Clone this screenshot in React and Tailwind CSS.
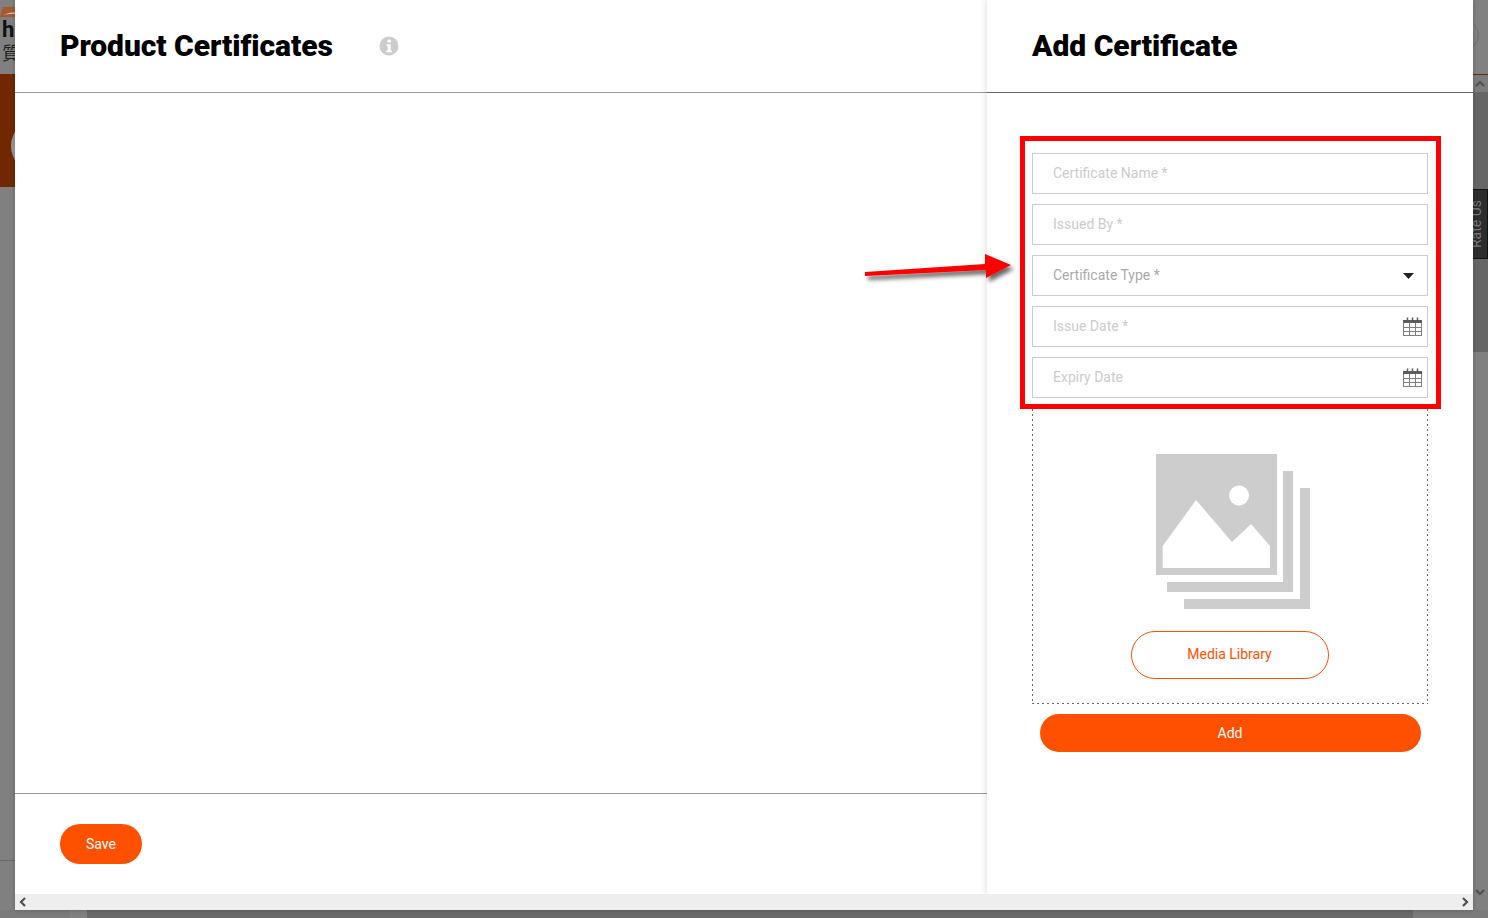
import React from "react";

const Calendar = () => (
  <svg width="19" height="19" viewBox="0 0 19 19" className="shrink-0">
    <rect x="0.5" y="3.5" width="18" height="15" fill="#fff" stroke="#808080" />
    <rect x="0" y="3" width="19" height="3" fill="#5c5c5c" />
    <path d="M6.500 6v13M12.500 6v13M0 10.500h19M0 14.500h19" stroke="#808080" />
    <path d="M4.500 0.500v3M9.500 0.500v3M14.500 0.500v3" stroke="#5c5c5c" strokeWidth="1.500" />
  </svg>
);

const Field = ({ label, dark, children }) => (
  <div className="flex h-[41px] items-center justify-between border border-[#ccc] pl-5 pr-[5px]">
    <span className={"-mt-[2px] text-sm " + (dark ? "text-[#aaa]" : "text-[#ccc]")}>{label}</span>
    {children}
  </div>
);

const Chevron = ({ d, className }) => (
  <svg width="10" height="10" viewBox="0 0 10 10" className={className}>
    <path d={d} fill="none" stroke="#505050" strokeWidth="2.200" />
  </svg>
);

export default function App() {
  return (
    <div className="relative flex h-[918px] w-[1488px] flex-col overflow-hidden bg-[#808080] font-['Roboto',sans-serif]">
      <div className="flex h-[910px] shrink-0">
        {/* Page behind the overlay, left side */}
        <div className="flex h-full w-[15px] shrink-0 flex-col overflow-hidden">
          <div className="h-[74px] overflow-hidden pt-[7px]">
            <svg width="15" height="10" viewBox="0 0 15 10" className="block">
              <path d="M3 0h12v10H0z" fill="#a5592c" />
              <path d="M2 8.500C6 6.500 10 5 15 5.500V7C10 6.500 6 7.500 2 8.500z" fill="#cfcfcf" />
            </svg>
            <div className="mt-[3px] pl-[2px] text-[22px] font-bold leading-[20px] text-[#111]">h</div>
            <div className="mt-[2px] w-[15px] overflow-hidden whitespace-nowrap pl-[2px] font-['Noto_Sans_CJK_TC',sans-serif] text-[18px] leading-[20px] text-[#222]">
              質
            </div>
          </div>
          <div className="h-[113px] overflow-hidden bg-[#712800] pt-[45px]">
            <div className="ml-[11px] h-[54px] w-[54px] rounded-full bg-[#999999]" />
          </div>
          <div className="mt-[673px] h-px bg-[#6b6b6b]" />
        </div>

        {/* Modal */}
        <div className="z-10 flex h-[910px] w-[1458px] shrink-0 flex-col bg-white shadow-[0_0_4px_rgba(0,0,0,0.25)]">
          <div className="flex min-h-0 flex-1">
            {/* Left pane */}
            <div className="flex w-[972px] shrink-0 flex-col">
              <div className="flex h-[93px] shrink-0 items-center border-b border-[#999] pb-px pl-[45px]">
                <h1 className="text-[30px] font-black leading-[36px] tracking-[-0.05px] text-black">Product Certificates</h1>
                <svg width="20" height="20" viewBox="0 0 20 20" className="ml-[46px] mt-px">
                  <circle cx="10" cy="10" r="9.500" fill="#ccc" />
                  <rect x="8.500" y="3.500" width="3.400" height="3.200" rx="1" fill="#fff" />
                  <path d="M7.500 8.200h4.200v6.400h1.200v1.700H7.500v-1.700h1.200V10H7.500z" fill="#fff" />
                </svg>
              </div>
              <div className="flex-1" />
              <div className="h-[101px] shrink-0 border-t border-[#999] pl-[45px] pt-[30px]">
                <button className="h-10 w-[82px] rounded-full bg-[#ff5000] text-sm text-white">Save</button>
              </div>
            </div>

            {/* Right pane */}
            <div className="z-10 flex w-[486px] shrink-0 flex-col shadow-[-3px_0_5px_rgba(0,0,0,0.08)]">
              <div className="flex h-[93px] shrink-0 items-center border-b border-[#666] pb-px pl-[45px]">
                <h2 className="text-[30px] font-black leading-[36px] text-black">Add Certificate</h2>
              </div>
              <div className="ml-[45px] mt-[60px] flex w-[396px] flex-col gap-[10px]">
                <Field label="Certificate Name *" />
                <Field label="Issued By *" />
                <Field label="Certificate Type *" dark>
                  <svg width="11" height="6" viewBox="0 0 11 6" className="mr-[8px]">
                    <path d="M0 0h11L5.500 6z" fill="#222" />
                  </svg>
                </Field>
                <Field label="Issue Date *">
                  <Calendar />
                </Field>
                <Field label="Expiry Date">
                  <Calendar />
                </Field>
              </div>
              <div className="ml-[45px] mt-[11px] flex h-[295px] w-[396px] flex-col items-center pt-[45px] [background:repeating-linear-gradient(to_bottom,#666_0_2px,transparent_2px_5px)_left_top/1px_100%_no-repeat,repeating-linear-gradient(to_bottom,#666_0_2px,transparent_2px_5px)_right_top/1px_100%_no-repeat,repeating-linear-gradient(to_right,#666_0_2px,transparent_2px_5px)_left_bottom/100%_1px_no-repeat]">
                <svg width="155" height="156" viewBox="0 0 155 156" className="ml-[7px]">
                  <path d="M0 0h121v121H0z" fill="#cdcdcd" />
                  <path d="M6.700 114V92L40 46 76 88 95 70 114 92V114z" fill="#fff" />
                  <circle cx="83" cy="41.500" r="10" fill="#fff" />
                  <path d="M127 17h10v121H11v-10h116z" fill="#cdcdcd" />
                  <path d="M144 34h10v121H28v-10h116z" fill="#cdcdcd" />
                </svg>
                <button className="mt-[21px] h-12 w-[198px] rounded-full border border-[#ff5000] bg-white pb-[2px] pr-px text-sm text-[#ff5000]">
                  Media Library
                </button>
              </div>
              <button className="ml-[53px] mt-[10px] h-[38px] w-[381px] rounded-full bg-[#ff5000] pr-px text-sm text-white">
                Add
              </button>
            </div>
          </div>

          {/* Horizontal scrollbar */}
          <div className="z-20 flex h-4 shrink-0 items-center justify-between bg-[#eeeeee] px-[3px]">
            <Chevron d="M7 1 3 5l4 4" />
            <Chevron d="M3 1l4 4-4 4" />
          </div>
        </div>

        {/* Page behind the overlay, right side */}
        <div className="flex h-full w-[15px] shrink-0 flex-col overflow-hidden">
          <div className="h-[75px] overflow-hidden border-b border-[#712800] bg-[#818181] pt-[19px]">
            <div className="ml-[-26px] h-8 w-8 rounded-full border border-[#707070]" />
          </div>
          <div className="flex h-[17px] items-center justify-center bg-[#7c7c7c]">
            <Chevron d="M1 7l4-4 4 4" className="-ml-[2px]" />
          </div>
          <div className="h-[260px] bg-[#666666] pt-[97px]">
            <div className="flex h-[70px] w-[15px] items-center overflow-hidden border-y border-r border-[#111] bg-[#2d2d2d]">
              <span className="ml-[-32px] block w-[70px] shrink-0 -rotate-90 text-center text-[14px] leading-none text-[#777]">
                Rate Us
              </span>
            </div>
          </div>
          <div className="flex-1" />
          <div className="mb-[10px] flex h-[17px] items-center justify-center">
            <Chevron d="M1 3l4 4 4-4" className="-ml-[2px]" />
          </div>
        </div>
      </div>

      {/* Horizontal scrollbar of the page behind */}
      <div className="flex h-2 shrink-0">
        <div className="w-[70px] bg-[#7b7b7b]" />
        <div className="w-[17px] bg-[#808080]" />
        <div className="w-[1326px] bg-[#696969]" />
        <div className="flex-1 bg-[#7b7b7b]" />
      </div>

      {/* Annotation over the form */}
      <div className="pointer-events-none absolute left-[1020px] top-[136px] z-20 h-[273px] w-[421px] border-[5px] border-[#ff0000]" />
      <svg width="170" height="50" viewBox="0 0 170 50" className="pointer-events-none absolute left-[860px] top-[245px] z-20">
        <defs>
          <filter id="arrowShadow" x="-10%" y="-50%" width="120%" height="200%">
            <feDropShadow dx="3" dy="4" stdDeviation="2" floodColor="#000" floodOpacity="0.6" />
          </filter>
        </defs>
        <path d="M5 27 125 19 125 9 151 20 126 33 126 25 5 31z" fill="#ff0000" filter="url(#arrowShadow)" />
      </svg>
    </div>
  );
}
